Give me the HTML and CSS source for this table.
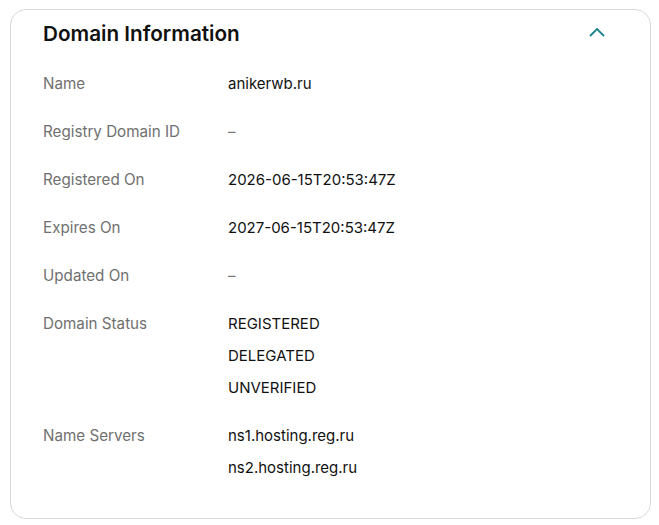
FILE: index.html
```html
<!DOCTYPE html>
<html lang="en">
<head>
<meta charset="utf-8">
<link rel="stylesheet" href="styles.css">
</head>
<body>
<section class="card">
  <header class="card-head">
    <h2 class="title">Domain Information</h2>
    <svg class="chevron" width="18" height="12" viewBox="0 0 18 12" aria-hidden="true">
      <path d="M2 10 L9 3 L16 10" fill="none" stroke="#1b8390" stroke-width="1.8"/>
    </svg>
  </header>
  <dl class="info">
    <div class="row"><dt>Name</dt><dd><span>anikerwb.ru</span></dd></div>
    <div class="row"><dt>Registry Domain ID</dt><dd><span class="empty">–</span></dd></div>
    <div class="row"><dt>Registered On</dt><dd><span>2026-06-15T20:53:47Z</span></dd></div>
    <div class="row"><dt>Expires On</dt><dd><span>2027-06-15T20:53:47Z</span></dd></div>
    <div class="row"><dt>Updated On</dt><dd><span class="empty">–</span></dd></div>
    <div class="row"><dt>Domain Status</dt><dd><span>REGISTERED</span><span>DELEGATED</span><span>UNVERIFIED</span></dd></div>
    <div class="row"><dt>Name Servers</dt><dd><span>ns1.hosting.reg.ru</span><span>ns2.hosting.reg.ru</span></dd></div>
  </dl>
</section>
</body>
</html>
```
FILE: styles.css
```css
html, body {
  margin: 0;
  background: #ffffff;
}
body {
  padding: 9px 8px 6px 10px;
  font-family: "Inter", "Liberation Sans", sans-serif;
  color: #111111;
}
.card {
  width: 641px;
  box-sizing: border-box;
  height: 510px;
  border: 1px solid #d6dadf;
  border-radius: 16px;
  padding: 0 32px;
}
.card-head {
  display: flex;
  align-items: center;
  justify-content: space-between;
  height: 46px;
}
.title {
  margin: 0;
  font-size: 20.7px;
  font-weight: 600;
  color: #111111;
  letter-spacing: 0;
}
.chevron {
  margin-right: 12px;
  margin-top: -2px;
}
.info {
  margin: 12px 0 0 0;
  display: flex;
  flex-direction: column;
  gap: 16px;
}
.row {
  display: grid;
  grid-template-columns: 185px 1fr;
}
dt {
  font-size: 15.2px;
  line-height: 32px;
  color: #6f6f6f;
}
dd {
  margin: 0;
  display: flex;
  flex-direction: column;
}
dd span {
  font-size: 15px;
  line-height: 32px;
  color: #111111;
}
dd .empty {
  color: #767676;
}
```
